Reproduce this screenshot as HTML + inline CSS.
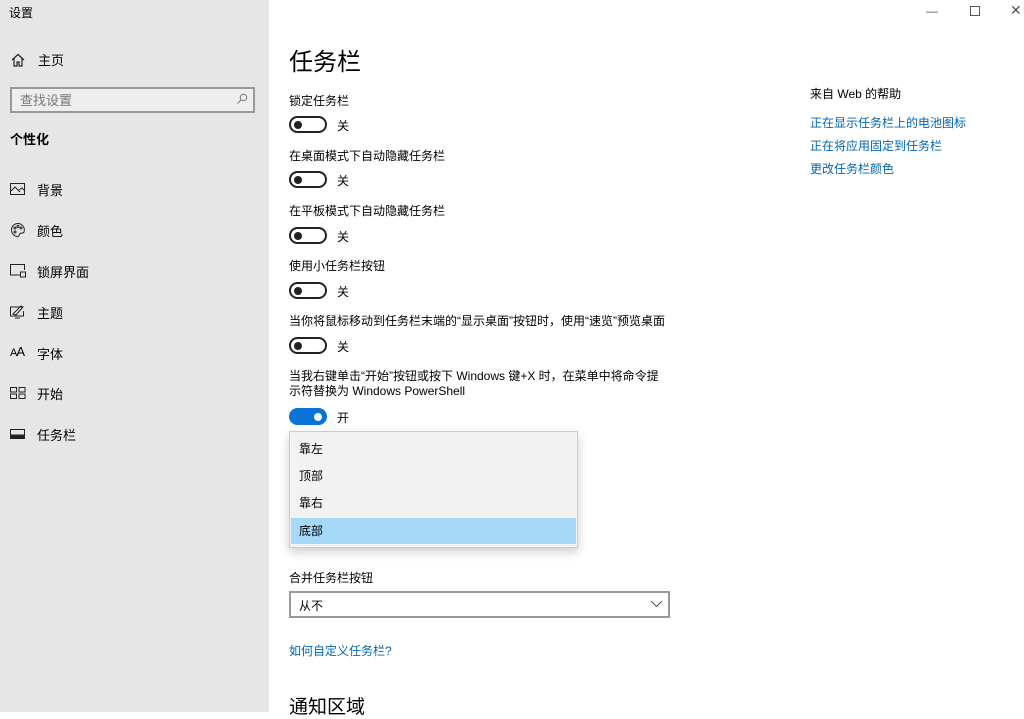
<!DOCTYPE html>
<html><head><meta charset="utf-8"><style>
*{margin:0;padding:0;box-sizing:border-box}
body{width:1024px;height:712px;overflow:hidden;background:#fff;font-family:"Liberation Sans","Noto Sans CJK SC",sans-serif;color:#000;position:relative;font-size:12px}
.side{position:absolute;left:0;top:0;width:269px;height:712px;background:#e6e6e6}
.a{position:absolute;white-space:nowrap}
.m{font-size:12px}
.tg{position:absolute;left:289px;width:38px;height:17px;border:2px solid #222;border-radius:9px}
.tg::after{content:"";position:absolute;left:3px;top:2.5px;width:8px;height:8px;border-radius:50%;background:#222}
.tg.on{background:#0a74d6;border-color:#0a74d6}
.tg.on::after{left:auto;right:3px;background:#fff}
.ic{position:absolute;left:10px}
</style></head><body>
<div class="side">
<div class="a" style="left:9px;top:4px;font-size:12px">设置</div>
<svg class="ic" style="top:52px" width="16" height="16" viewBox="0 0 16 16" fill="none" stroke="#222" stroke-width="1.2"><path d="M2 8 8 2.5 14 8M4 6.5V14h3v-4h2v4h3V6.5"/></svg>
<div class="a" style="left:38px;top:50px;font-size:13px">主页</div>
<div class="a" style="left:10px;top:87px;width:245px;height:26px;border:2px solid #999;background:#eee"></div>
<div class="a" style="left:20px;top:90px;font-size:13px;color:#777">查找设置</div>
<svg class="a" style="left:236px;top:93px" width="12" height="12" viewBox="0 0 12 12" fill="none" stroke="#777"><circle cx="7.5" cy="4.5" r="3.3"/><path d="M5 7 1.5 10.5"/></svg>
<div class="a" style="left:10px;top:129px;font-size:13px;font-weight:bold">个性化</div>
<svg class="ic" style="top:183px" width="16" height="13" viewBox="0 0 16 13" fill="none" stroke="#222"><rect x=".5" y=".5" width="14" height="11"/><path d="M1 8l4-4 5 5M9 7l3-2 3 3"/></svg>
<div class="a" style="left:37px;top:180px;font-size:13px">背景</div>
<svg class="ic" style="top:222px" width="16" height="16" viewBox="0 0 16 16" fill="none" stroke="#222"><path d="M8 1.5a6.5 6.5 0 1 0 0 13c1.5 0 1-2 2-3s3 .5 4-1.5A6.5 6.5 0 0 0 8 1.5z"/><circle cx="5" cy="6" r="1"/><circle cx="8" cy="4.5" r="1"/><circle cx="11" cy="6" r="1"/><circle cx="5" cy="10" r="1"/></svg>
<div class="a" style="left:37px;top:221px;font-size:13px">颜色</div>
<svg class="ic" style="top:264px" width="16" height="14" viewBox="0 0 16 14" fill="none" stroke="#222"><path d="M10 11H.5V.5h14V6"/><rect x="10.5" y="8" width="5" height="5"/></svg>
<div class="a" style="left:37px;top:262px;font-size:13px">锁屏界面</div>
<svg class="ic" style="top:304px" width="16" height="15" viewBox="0 0 16 15" fill="none" stroke="#222"><path d="M12 3H.5v9h13V7M5 14h5M3 10l8-8 2 1-7 8z"/></svg>
<div class="a" style="left:37px;top:303px;font-size:13px">主题</div>
<div class="a" style="left:10px;top:344px;font-size:11px;letter-spacing:-1px">A<span style="font-size:13px">A</span></div>
<div class="a" style="left:37px;top:344px;font-size:13px">字体</div>
<svg class="ic" style="top:387px" width="16" height="12" viewBox="0 0 16 12" fill="none" stroke="#222"><rect x=".5" y=".5" width="6" height="4.5"/><rect x="9" y=".5" width="6" height="4.5"/><rect x=".5" y="7" width="6" height="4.5"/><rect x="9" y="7" width="6" height="4.5"/></svg>
<div class="a" style="left:37px;top:384px;font-size:13px">开始</div>
<svg class="ic" style="top:429px" width="16" height="11" viewBox="0 0 16 11" fill="none" stroke="#222"><rect x=".5" y=".5" width="14" height="9"/><rect x="1" y="6" width="13" height="3" fill="#222"/></svg>
<div class="a" style="left:37px;top:425px;font-size:13px">任务栏</div>
</div>
<div class="a" style="left:926px;top:4px;color:#555">—</div>
<div class="a" style="left:970px;top:6px;width:10px;height:10px;border:1px solid #555"></div>
<div class="a" style="left:1010px;top:2px;color:#555;font-size:14px">✕</div>
<div class="a" style="left:289px;top:42px;font-size:24px">任务栏</div>
<div class="a m" style="left:289px;top:92px">锁定任务栏</div>
<div class="tg" style="top:116px"></div><div class="a m" style="left:337px;top:117px">关</div>
<div class="a m" style="left:289px;top:147px">在桌面模式下自动隐藏任务栏</div>
<div class="tg" style="top:171px"></div><div class="a m" style="left:337px;top:172px">关</div>
<div class="a m" style="left:289px;top:202px">在平板模式下自动隐藏任务栏</div>
<div class="tg" style="top:227px"></div><div class="a m" style="left:337px;top:228px">关</div>
<div class="a m" style="left:289px;top:257px">使用小任务栏按钮</div>
<div class="tg" style="top:282px"></div><div class="a m" style="left:337px;top:283px">关</div>
<div class="a m" style="left:289px;top:312px">当你将鼠标移动到任务栏末端的“显示桌面”按钮时，使用“速览”预览桌面</div>
<div class="tg" style="top:337px"></div><div class="a m" style="left:337px;top:338px">关</div>
<div class="a m" style="left:289px;top:369px;line-height:15px">当我右键单击“开始”按钮或按下 Windows 键+X 时，在菜单中将命令提<br>示符替换为 Windows PowerShell</div>
<div class="tg on" style="top:408px"></div><div class="a m" style="left:337px;top:409px">开</div>
<div class="a" style="left:289px;top:431px;width:289px;height:117px;background:#f2f2f2;border:1px solid #ccc;box-shadow:0 4px 10px rgba(0,0,0,.2)"></div>
<div class="a" style="left:291px;top:518px;width:285px;height:26px;background:#a6d8fa"></div>
<div class="a m" style="left:299px;top:440px">靠左</div>
<div class="a m" style="left:299px;top:467px">顶部</div>
<div class="a m" style="left:299px;top:494px">靠右</div>
<div class="a m" style="left:299px;top:522px">底部</div>
<div class="a m" style="left:289px;top:569px">合并任务栏按钮</div>
<div class="a" style="left:289px;top:591px;width:381px;height:27px;border:2px solid #999"></div>
<div class="a m" style="left:299px;top:597px">从不</div>
<svg class="a" style="left:650px;top:600px" width="13" height="8" viewBox="0 0 13 8" fill="none" stroke="#555"><path d="M1 1l5.5 5.5L12 1"/></svg>
<div class="a m" style="left:289px;top:642px;color:#0066b4">如何自定义任务栏?</div>
<div class="a" style="left:289px;top:692px;font-size:19px">通知区域</div>
<div class="a m" style="left:810px;top:85px">来自 Web 的帮助</div>
<div class="a m" style="left:810px;top:114px;color:#0066b4">正在显示任务栏上的电池图标</div>
<div class="a m" style="left:810px;top:137px;color:#0066b4">正在将应用固定到任务栏</div>
<div class="a m" style="left:810px;top:160px;color:#0066b4">更改任务栏颜色</div>
</body></html>
